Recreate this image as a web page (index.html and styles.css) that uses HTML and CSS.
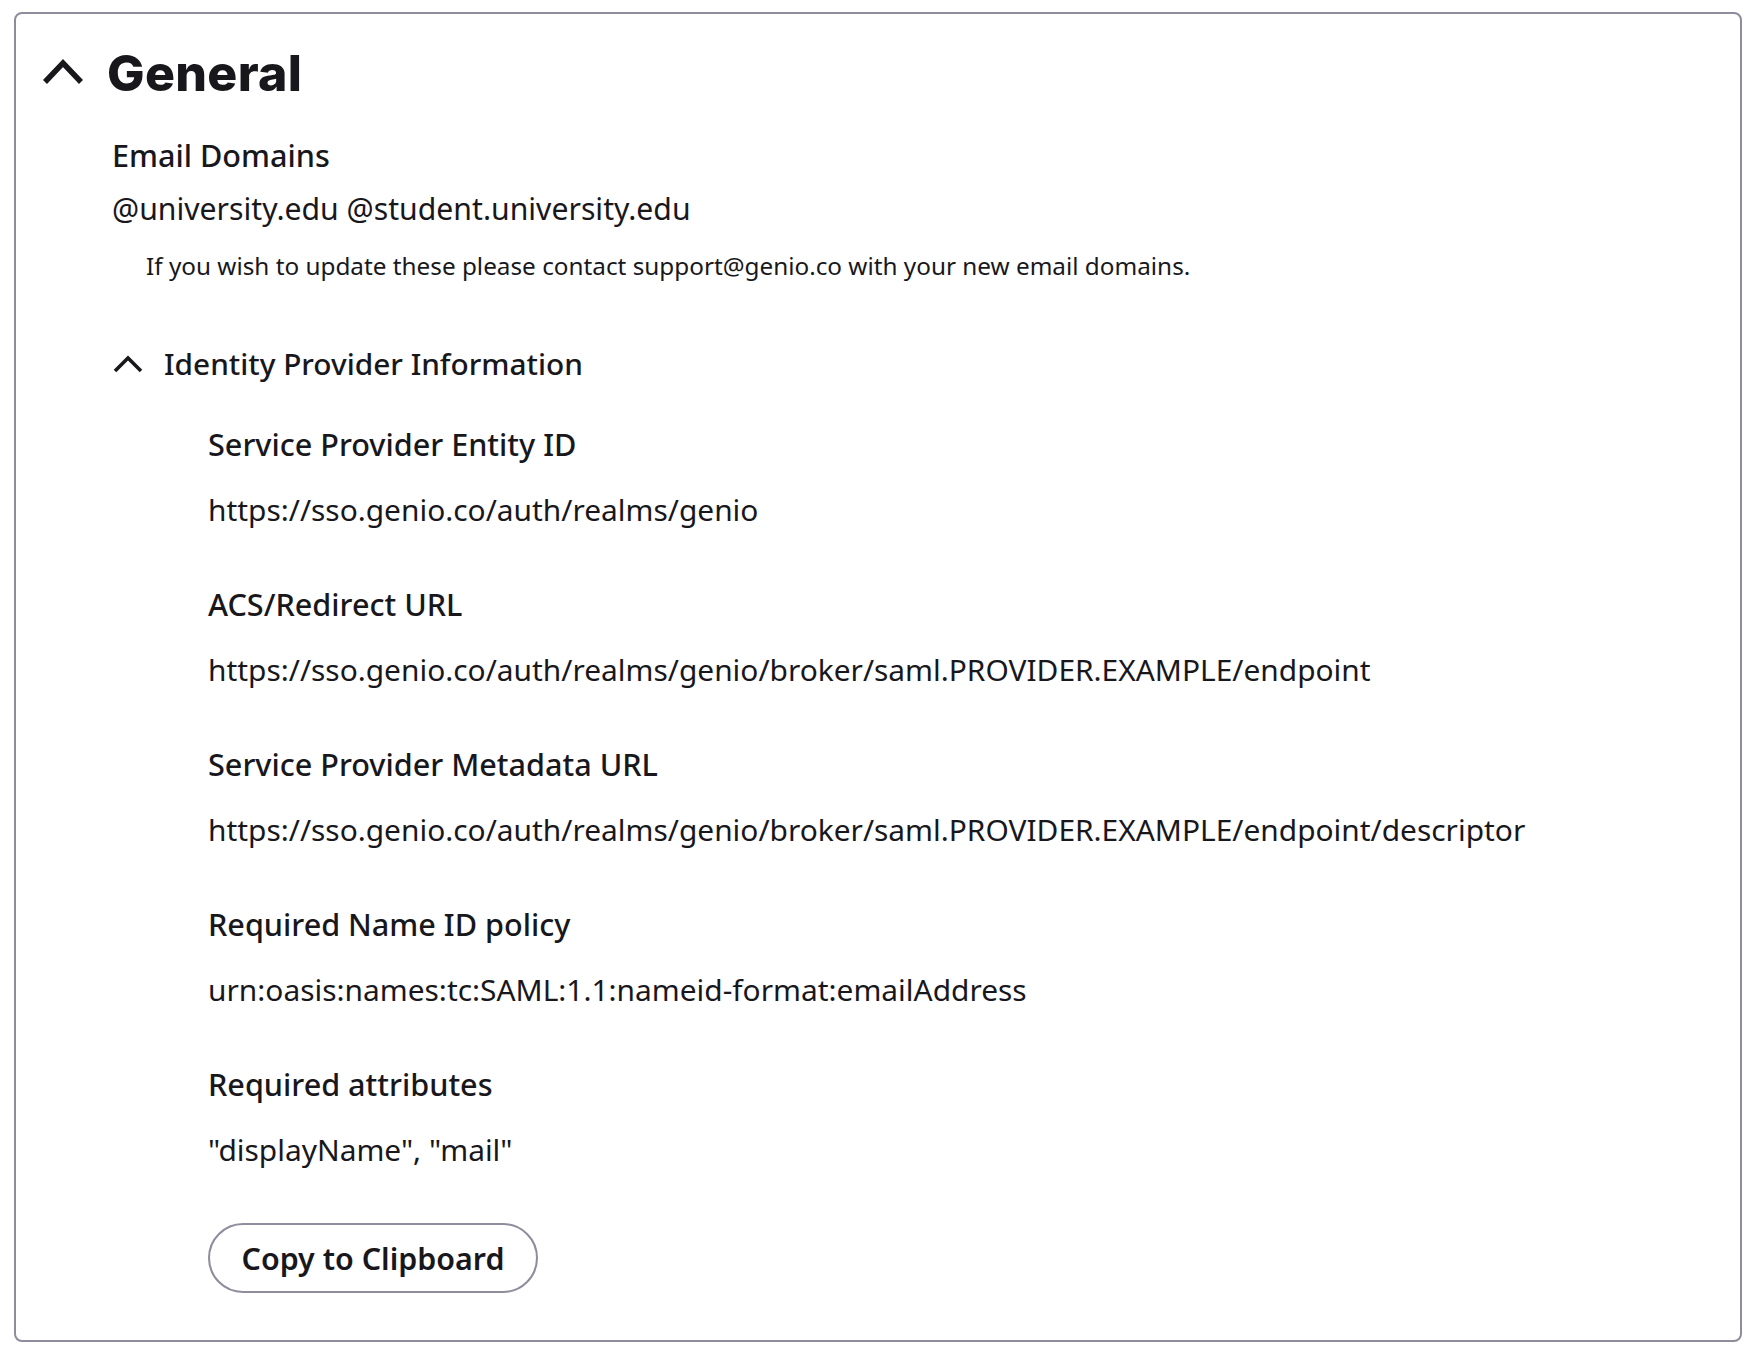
FILE: index.html
```html
<!DOCTYPE html>
<html lang="en">

<head>
    <meta charset="UTF-8">
    <meta name="viewport" content="width=device-width, initial-scale=1.0">
    <title>General</title>
    <link rel="stylesheet" href="styles.css">
</head>

<body>
    <div class="panel">
        <div class="panel-head">
            <svg class="chev-big" width="44" height="28" viewBox="0 0 44 28">
                <polyline points="4,25 22,6 40,25" fill="none" stroke="#18181c" stroke-width="5.5" />
            </svg>
            <h1>General</h1>
        </div>
        <div class="panel-body">
            <div class="field-label">Email Domains</div>
            <div class="domains">@university.edu @student.university.edu</div>
            <div class="hint">If you wish to update these please contact support@genio.co with your new email domains.</div>

            <div class="idp-head">
                <svg width="32" height="20" viewBox="0 0 32 20">
                    <polyline points="3,17 16,4 29,17" fill="none" stroke="#18181c" stroke-width="3.6" />
                </svg>
                <span>Identity Provider Information</span>
            </div>
            <div class="idp-body">
                <div class="item">
                    <div class="field-label">Service Provider Entity ID</div>
                    <div class="value">https://sso.genio.co/auth/realms/genio</div>
                </div>
                <div class="item">
                    <div class="field-label">ACS/Redirect URL</div>
                    <div class="value">https://sso.genio.co/auth/realms/genio/broker/saml.PROVIDER.EXAMPLE/endpoint</div>
                </div>
                <div class="item">
                    <div class="field-label">Service Provider Metadata URL</div>
                    <div class="value">https://sso.genio.co/auth/realms/genio/broker/saml.PROVIDER.EXAMPLE/endpoint/descriptor</div>
                </div>
                <div class="item">
                    <div class="field-label">Required Name ID policy</div>
                    <div class="value">urn:oasis:names:tc:SAML:1.1:nameid-format:emailAddress</div>
                </div>
                <div class="item">
                    <div class="field-label">Required attributes</div>
                    <div class="value">"displayName", "mail"</div>
                </div>
                <button class="copy-btn">Copy to Clipboard</button>
            </div>
        </div>
    </div>
</body>

</html>
```

FILE: styles.css
```css
body{
    margin: 0;
    padding: 12px 16px 13px 14px;
    font-family: "Noto Sans", Lato, sans-serif;
    color: #18181c;
    background: #fff;
}
.panel{
    border: 2px solid #8e8c9d;
    border-radius: 8px;
    padding: 29px 24px 47px 25px;
}
.panel-head{
    display: flex;
    align-items: center;
    gap: 22px;
    height: 60px;
}
.chev-big{
    margin-bottom: 4px;
}
.panel-head h1{
    margin: 0;
    font-family: Inter, sans-serif;
    font-weight: 800;
    font-size: 50px;
    line-height: 60px;
    letter-spacing: 0.3px;
}
.panel-body{
    padding-left: 71px;
    margin-top: 32px;
}
.field-label{
    font-size: 30.6px;
    font-weight: 500;
    line-height: 40px;
}
.domains{
    margin-top: 14px;
    font-size: 30.2px;
    line-height: 40px;
}
.hint{
    margin: 22px 0 0 34px;
    font-size: 24.3px;
    line-height: 30px;
}
.idp-head{
    display: flex;
    align-items: center;
    gap: 20px;
    height: 40px;
    margin-top: 63px;
}
.idp-head span{
    font-size: 29.8px;
    font-weight: 500;
    line-height: 40px;
}
.idp-body{
    padding-left: 96px;
    margin-top: 40px;
}
.item + .item{
    margin-top: 54px;
}
.value{
    margin-top: 26px;
    font-size: 29.9px;
    line-height: 40px;
}
.copy-btn{
    display: block;
    margin-top: 53px;
    width: 330px;
    height: 70px;
    border: 2px solid #8e8c9d;
    border-radius: 35px;
    background: #fff;
    color: #18181c;
    font-family: "Noto Sans", Lato, sans-serif;
    font-size: 30.4px;
    font-weight: 600;
}
```
